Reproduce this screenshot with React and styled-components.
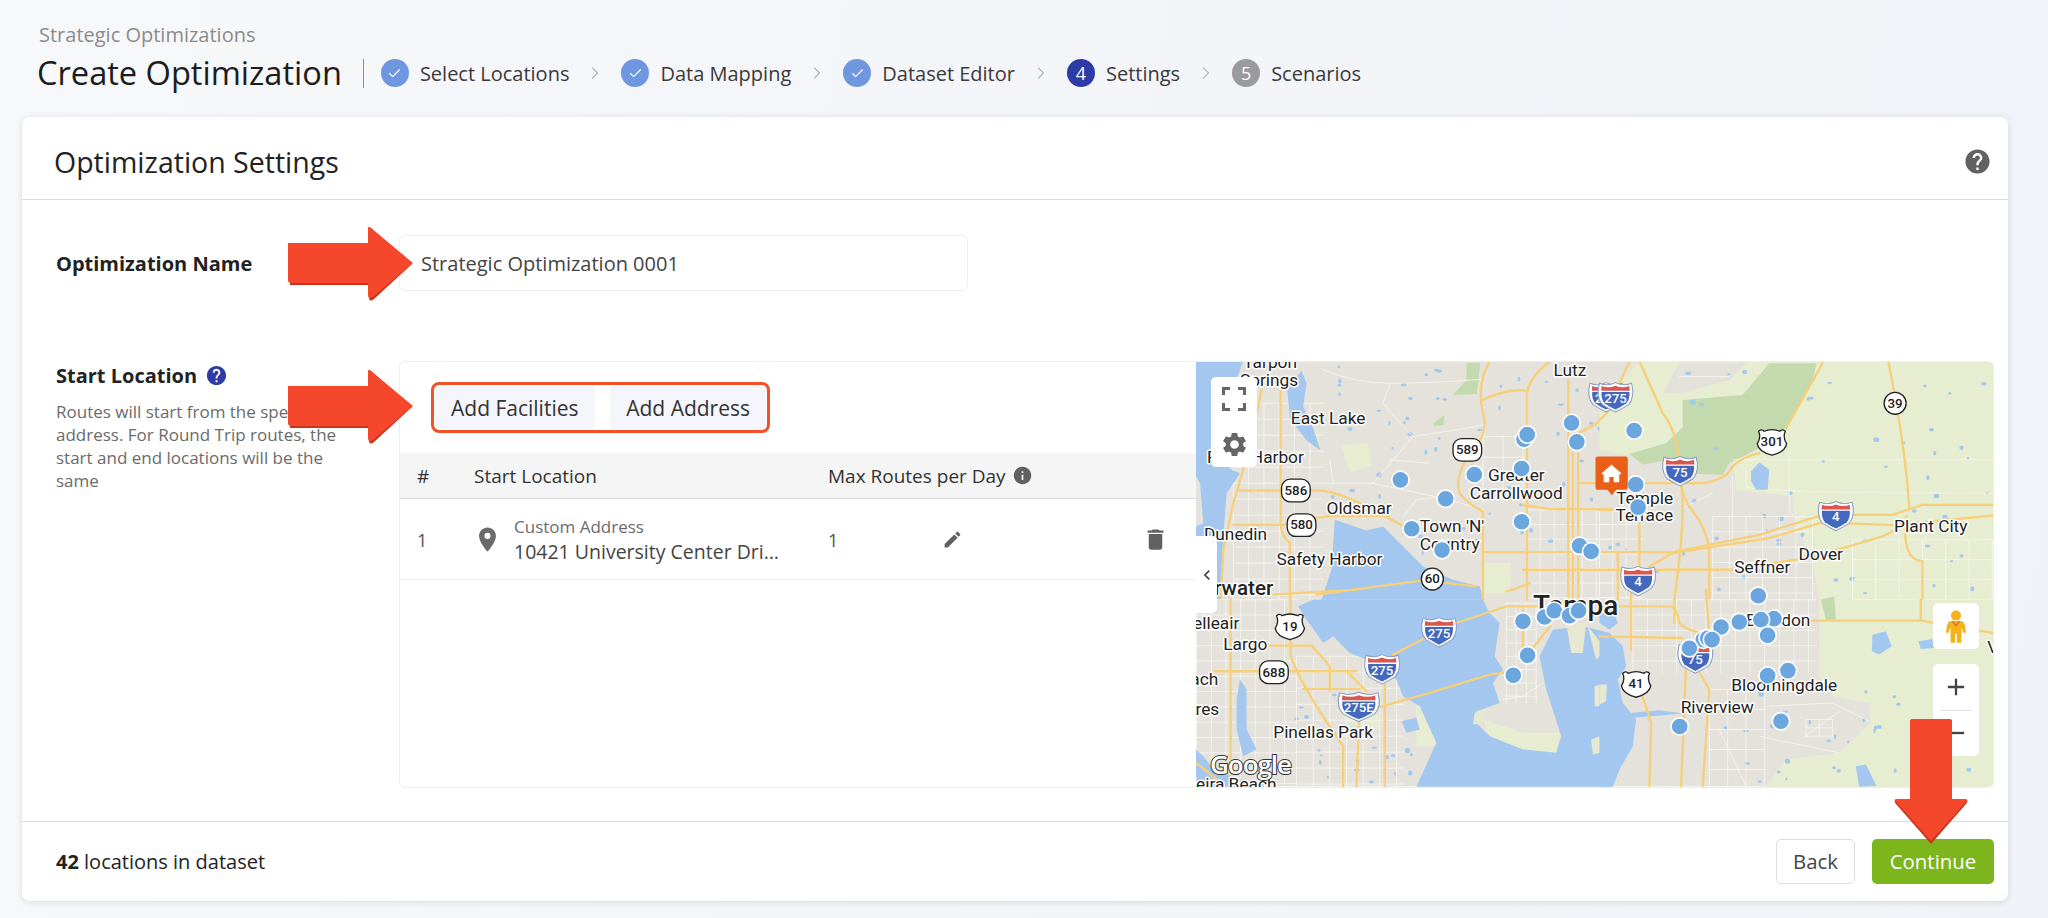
import styled, { createGlobalStyle } from 'styled-components';
import { Check, ChevronRight } from 'lucide-react';
import {
  MdAdd,
  MdChevronLeft,
  MdDelete,
  MdEdit,
  MdHelp,
  MdInfo,
  MdPlace,
  MdRemove,
  MdSettings,
} from 'react-icons/md';

const STEPS = [
  { label: 'Select Locations', state: 'done' },
  { label: 'Data Mapping', state: 'done' },
  { label: 'Dataset Editor', state: 'done' },
  { label: 'Settings', state: 'active', number: 4 },
  { label: 'Scenarios', state: 'todo', number: 5 },
];

// street grids, one per built up area
const gridPath = (x0, y0, x1, y1, stepX, stepY) => {
  let d = '';
  for (let x = x0; x <= x1; x += stepX) d += `M${x},${y0}V${y1}`;
  for (let y = y0; y <= y1; y += stepY) d += `M${x0},${y}H${x1}`;
  return d;
};

// small ponds scattered over the land, always the same ones
const pondList = (count, seed, x0, y0, x1, y1) => {
  let s = seed;
  const next = () => {
    s = (s * 9301 + 49297) % 233280;
    return s / 233280;
  };
  return Array.from({ length: count }, () => ({
    x: x0 + next() * (x1 - x0),
    y: y0 + next() * (y1 - y0),
    rx: 3 + next() * 6,
    ry: 3 + next() * 5,
  }));
};

// The map is authored in four tiles, each one in 3x pixels
const TILES = [
  {
    id: 'nw',
    at: [-18, -36],
    park: ['790,135 830,90 830,38 872,38 862,132', '730,220 765,195 760,225 735,228'],
    pale: ['455,285 535,280 545,350 480,365', '880,640 965,640 960,730 885,730', '360,250 385,240 390,290'],
    water: [
      '18,35 158,35 130,120 100,200 60,300 125,360 150,370 110,430 100,560 90,750 18,750 18,530 40,520 30,400 18,380',
      '292,115 335,62 350,100 340,170 372,240 392,302 350,272 300,205',
      '395,750 425,660 435,510 530,542 580,530 640,590 700,650 790,690 870,710 882,750',
    ],
    white: [
      gridPath(130, 160, 400, 750, 46, 48),
      gridPath(1010, 480, 1260, 750, 42, 44),
      gridPath(880, 260, 1010, 460, 60, 62),
      'M400,60 Q500,100 600,100 T880,88',
      'M600,105 L580,160 L640,230 L670,260 L800,240 L880,225',
      'M550,400 L670,260',
      'M550,400 L780,450 L880,480',
      'M400,400 L550,400',
      'M600,330 L720,340',
      'M420,330 L430,400',
      'M640,500 L680,450 L760,440',
    ],
    yellow: [
      'M272,120 V520 Q275,560 300,580 V750',
      'M150,422 H400 Q450,430 520,465 L640,528',
      'M130,525 H280 Q380,500 440,498 H600',
      'M215,120 Q180,300 130,460 L100,600 L92,750',
      'M900,35 Q860,100 880,190 Q895,240 860,290 Q790,370 810,430 Q830,460 880,485 V750',
      'M880,150 Q950,115 1012,122',
      'M1080,35 Q1020,80 1012,130 V750',
      'M1136,90 V750',
      'M1166,310 V750',
      'M1150,310 V750',
      'M1170,248 Q1220,225 1262,190',
      'M880,607 H1262',
      'M1000,660 H1262',
      'M1000,465 L1080,478 H1262',
      'M1165,400 H1262',
      'M380,735 L700,692 L860,710',
      'M950,725 Q1000,710 1020,700',
    ],
    labels: [
      ['Tarpon', 160, 55],
      ['Springs', 150, 108],
      ['East Lake', 303, 222],
      ['Oldsmar', 410, 492],
      ['Greater', 895, 395],
      ['Carrollwood', 840, 447],
      ["Town 'N'", 690, 548],
      ['Country', 690, 602],
      ['Lutz', 1092, 78],
      ['Dunedin', 42, 570],
      ['Safety Harbor', 260, 645],
    ],
    labelsEnd: [['Palm Harbor', 342, 338]],
    bold: [['Clearwater', 250, 735]],
    stateShields: [
      ['589', 833, 300],
      ['586', 318, 422],
      ['580', 335, 526],
    ],
    circleShields: [['60', 728, 688]],
    usShields: [],
    interstates: [['275', 1250, 140]],
    markers: [
      [632, 390], [768, 447], [854, 374], [996, 356], [1003, 268], [1013, 254], [1146, 219],
      [1162, 276], [666, 537], [757, 601], [996, 516], [1170, 588], [1205, 605],
    ],
    ponds: pondList(70, 17, 420, 40, 1240, 620),
  },
  {
    id: 'ne',
    at: [1212, -36],
    pale: [
      '120,35 1182,35 1182,750 660,750 640,640 590,520 580,440 410,420 400,330 230,340 0,300 0,160',
    ],
    gray: ['240,38 440,38 390,90 250,130 190,130', '400,440 560,440 560,500 400,500'],
    park: [
      '250,150 430,135 510,40 652,40 640,92 560,235 470,300 390,340 370,375 280,372 240,322 130,345 90,312 200,280 250,232',
    ],
    water: ['455,365 480,338 510,360 505,420 470,420 455,392'],
    white: [
      gridPath(0, 480, 130, 750, 40, 44),
      gridPath(340, 500, 640, 750, 50, 46),
      gridPath(760, 570, 1180, 750, 70, 60),
      'M400,330 H1182',
      'M440,360 V410 Q470,430 1182,430',
      'M570,322 V480 L585,500',
      'M400,380 V590',
      'M240,80 H390',
      'M340,430 L260,470',
    ],
    yellow: [
      'M120,35 Q150,100 190,190 Q240,250 245,400 Q250,440 270,470 Q320,530 330,600 V750',
      'M245,400 Q260,500 225,750',
      'M0,210 Q50,170 60,100 L90,35',
      'M0,607 H220 L480,555 L670,495 H880 L970,465 H1182',
      'M150,650 L220,610 L510,565 L670,518 L880,526 L1182,497',
      'M0,660 H400 L640,622 L850,560 L890,540',
      'M120,400 H310 Q380,390 400,350 Q430,320 480,310',
      'M560,235 L670,40',
      'M868,35 Q920,300 930,470',
      'M922,500 Q905,630 970,635 V750',
      'M0,480 H50',
      'M120,520 V700',
      'M55,610 V750',
    ],
    labels: [
      ['Temple', 50, 462],
      ['Terrace', 48, 513],
      ['Seffner', 405, 670],
      ['Dover', 598, 630],
      ['Plant City', 885, 546],
    ],
    circleShields: [['39', 888, 160]],
    usShields: [['301', 518, 276]],
    interstates: [
      ['275', 48, 140],
      ['75', 242, 362],
      ['4', 710, 497],
      ['4', 116, 692],
    ],
    markers: [[104, 242], [109, 404], [116, 472], [477, 738]],
    ponds: pondList(55, 91, 20, 60, 1170, 740),
  },
  {
    id: 'sw',
    at: [-18, 684],
    pale: ['435,360 560,340 570,420 480,400', '680,345 730,350 745,470 680,470', '880,390 1000,430 1110,430 1100,490 1000,480 900,440'],
    water: [
      '325,50 370,30 880,30 900,70 930,100 915,200 940,240 910,280 930,340 860,365 855,395 900,440 1000,480 1100,490 1115,440 1070,300 1050,200 1090,120 1180,110 1262,130 1262,592 680,592 740,460 690,350 640,320 620,270 530,210 480,190 430,140 400,160 350,90',
      '18,480 40,500 70,540 150,570 250,592 18,592',
      '150,270 170,300 170,420 200,480 160,500 140,420 140,330',
      '635,395 680,385 690,420 650,430',
    ],
    land: [
      '1130,100 1190,100 1180,190 1145,190',
      '1195,110 1250,180 1220,210',
      '1215,290 1255,280 1250,350 1215,350',
      '1205,450 1230,440 1235,490 1210,495',
      '855,370 890,360 880,400 850,405',
    ],
    white: [
      gridPath(20, 30, 320, 592, 44, 46),
      gridPath(320, 200, 640, 592, 50, 48),
      gridPath(950, 40, 1040, 340, 30, 40),
      'M370,25 L400,140',
      'M940,330 L1000,320 L1060,280',
    ],
    yellow: [
      'M122,30 V592',
      'M302,30 V200 Q340,300 460,470 V592',
      'M232,168 H365 L420,230 V305',
      'M75,245 H500',
      'M340,298 H510',
      'M470,245 L530,305',
      'M510,340 L500,592',
      'M585,280 V592',
      'M610,195 L700,148 L800,100 L950,50 H1040',
      'M570,352 L720,310 L900,255 L950,248',
      'M1000,60 V210',
      'M1030,175 L1082,110',
      'M250,15 L500,0',
      'M18,520 L80,570',
    ],
    labels: [
      ['Largo', 100, 182],
      ['Pinellas Park', 250, 445],
    ],
    labelsEnd: [
      ['Belleair', 148, 118],
      ['Beach', 85, 285],
      ['Shores', 88, 375],
      ['Madeira Beach', 260, 602],
    ],
    bold: [],
    stateShields: [['688', 252, 248]],
    usShields: [['19', 300, 110]],
    interstates: [
      ['275', 748, 126],
      ['275', 577, 237],
      ['275E', 507, 350, true],
    ],
    markers: [
      [1000, 95], [1065, 82], [1094, 63], [1140, 78], [1167, 63], [1014, 197], [971, 257],
    ],
    ponds: pondList(22, 43, 320, 300, 680, 580),
  },
  {
    id: 'se',
    at: [1212, 684],
    pale: [
      '660,30 1182,30 1182,592 500,592 560,510 720,490 815,400 810,340 700,320 660,260',
    ],
    park: ['665,30 705,20 710,90 680,90'],
    water: [
      '0,130 30,130 70,170 80,230 55,270 70,340 110,390 100,470 60,540 40,592 0,592',
      '0,45 40,60 55,100 30,120 0,100',
      '770,530 800,525 832,590 780,592',
      '820,135 860,125 878,170 840,195 818,185',
      '958,155 1000,148 1005,175 965,178',
      '90,370 180,362 250,372 180,378 100,385',
    ],
    land: ['0,285 22,285 20,335 0,345'],
    white: [
      gridPath(100, 30, 650, 250, 44, 46),
      gridPath(330, 300, 500, 590, 55, 60),
      gridPath(620, 390, 700, 440, 40, 25),
      'M510,350 L700,340 L810,395',
      'M620,440 L720,365',
      'M480,440 L720,490',
      'M360,420 L440,590',
    ],
    yellow: [
      'M965,30 V93',
      'M630,93 H965 L1182,130',
      'M0,50 H215 Q235,60 240,100 Q260,125 330,132',
      'M225,30 V100',
      'M0,140 L250,145',
      'M95,0 V180',
      'M260,230 L245,592',
      'M290,230 L330,300 L310,592',
      'M130,322 L155,400 L150,592',
      'M320,0 L328,120',
    ],
    labels: [
      ['Brandon', 440, 110],
      ['Bloomingdale', 396, 305],
      ['Riverview', 244, 370],
      ['Valrico', 1165, 190],
    ],
    bold: [],
    usShields: [['41', 110, 283]],
    interstates: [['75', 288, 205]],
    markers: [
      [420, 97], [365, 112], [524, 87], [485, 90], [505, 137], [312, 150], [325, 146], [338, 150],
      [270, 176], [505, 258], [566, 243], [241, 411], [545, 395],
    ],
    ponds: pondList(30, 7, 340, 300, 1170, 580),
  },
];

function InterstateShield({ number, x, y, wide }) {
  const scale = wide ? 1.3 : 1.1;
  return (
    <g transform={`translate(${x} ${y})`}>
      <g transform={`scale(${scale} 1)`}>
        <path
          d="M-44,-40 Q-22,-30 0,-42 Q22,-30 44,-40 Q54,0 36,24 Q16,38 0,46 Q-16,38 -36,24 Q-54,0 -44,-40Z"
          fill="#fff"
          stroke="#8d9fc4"
          strokeWidth="3"
        />
        <path
          d="M-38,-14 H38 Q40,6 30,20 Q14,32 0,39 Q-14,32 -30,20 Q-40,6 -38,-14Z"
          fill="#4468bd"
        />
        <path d="M-38,-32 Q-18,-24 0,-33 Q18,-24 38,-32 L39,-18 H-39Z" fill="#d9574f" />
      </g>
      <ShieldNumber x="0" y="18" fill="#fff">
        {number}
      </ShieldNumber>
    </g>
  );
}

function UsShield({ number, x, y }) {
  return (
    <g transform={`translate(${x} ${y})`}>
      <path
        d="M-40,-32 Q-30,-40 -24,-32 Q0,-42 24,-32 Q30,-40 40,-32 Q32,-14 44,6 Q40,30 0,40 Q-40,30 -44,6 Q-32,-14 -40,-32Z"
        fill="#fff"
        stroke="#222"
        strokeWidth="4"
      />
      <ShieldNumber x="0" y="13" fill="#222">
        {number}
      </ShieldNumber>
    </g>
  );
}

function TileLayer({ tile }) {
  return (
    <g transform={`translate(${tile.at[0]} ${tile.at[1]})`}>
      {(tile.pale || []).map((p) => (
        <polygon key={p} points={p} fill="#e7edd0" />
      ))}
      {(tile.gray || []).map((p) => (
        <polygon key={p} points={p} fill="#e4e1da" />
      ))}
      {(tile.park || []).map((p) => (
        <polygon key={p} points={p} fill="#c3d9ae" />
      ))}
      {tile.ponds.map((p, i) => (
        <ellipse key={i} cx={p.x} cy={p.y} rx={p.rx} ry={p.ry} fill="#a3c8ee" />
      ))}
      {tile.white.map((d) => (
        <Road key={d} d={d} stroke="#f7f6f3" strokeWidth="3" strokeOpacity="0.8" />
      ))}
      {tile.water.map((p) => (
        <polygon key={p} points={p} fill="#a3c7ee" />
      ))}
      {(tile.land || []).map((p) => (
        <polygon key={p} points={p} fill="#e6e8d2" />
      ))}
      {tile.yellow.map((d) => (
        <Road key={d} d={d} stroke="#f6cf78" strokeWidth="7" />
      ))}
    </g>
  );
}

function TileOverlay({ tile }) {
  return (
    <g transform={`translate(${tile.at[0]} ${tile.at[1]})`}>
      {(tile.labels || []).map(([text, x, y]) => (
        <MapLabel key={text} x={x} y={y}>
          {text}
        </MapLabel>
      ))}
      {(tile.labelsEnd || []).map(([text, x, y]) => (
        <MapLabel key={text} x={x} y={y} textAnchor="end">
          {text}
        </MapLabel>
      ))}
      {(tile.bold || []).map(([text, x, y]) => (
        <MapLabel key={text} x={x} y={y} textAnchor="end" $big>
          {text}
        </MapLabel>
      ))}
      {(tile.stateShields || []).map(([n, x, y]) => (
        <g key={n} transform={`translate(${x} ${y})`}>
          <rect x="-43" y="-34" width="86" height="68" rx="26" fill="#fff" stroke="#222" strokeWidth="4" />
          <ShieldNumber x="0" y="13" fill="#222">
            {n}
          </ShieldNumber>
        </g>
      ))}
      {(tile.circleShields || []).map(([n, x, y]) => (
        <g key={n} transform={`translate(${x} ${y})`}>
          <circle r="33" fill="#fff" stroke="#222" strokeWidth="4" />
          <ShieldNumber x="0" y="13" fill="#222">
            {n}
          </ShieldNumber>
        </g>
      ))}
      {(tile.usShields || []).map(([n, x, y]) => (
        <UsShield key={n} number={n} x={x} y={y} />
      ))}
      {tile.interstates.map(([n, x, y, wide]) => (
        <InterstateShield key={`${n}${x}`} number={n} x={x} y={y} wide={wide} />
      ))}
    </g>
  );
}

function TileMarkers({ tile }) {
  return (
    <g transform={`translate(${tile.at[0]} ${tile.at[1]})`}>
      {tile.markers.map(([x, y]) => (
        <circle key={`${x}-${y}`} cx={x} cy={y} r="26" fill="#6ba6de" stroke="#fff" strokeWidth="5" />
      ))}
    </g>
  );
}

function MapDrawing() {
  return (
    <MapSvg viewBox="0 0 2394 1275" preserveAspectRatio="none">
      <rect width="2394" height="1275" fill="#e5e2db" />
      {TILES.map((tile) => (
        <TileLayer key={tile.id} tile={tile} />
      ))}
      {TILES.map((tile) => (
        <TileOverlay key={tile.id} tile={tile} />
      ))}
      <MapLabel x="1012" y="760" $tampa>
        Tampa
      </MapLabel>
      {TILES.map((tile) => (
        <TileMarkers key={tile.id} tile={tile} />
      ))}
      {/* home marker of the start location */}
      <g transform="translate(1200 284)">
        <path d="M6,0 H91 Q97,0 97,6 V94 Q97,100 91,100 H62 L49,116 L36,100 H6 Q0,100 0,94 V6 Q0,0 6,0Z" fill="#ea5f17" />
        <path
          d="M48,26 L76,50 V52 H70 V76 H56 V60 H40 V76 H26 V52 H20 V50Z"
          fill="#fff"
          stroke="#fff"
          strokeWidth="3"
          strokeLinejoin="round"
        />
      </g>
      <GoogleMark x="42" y="1238">
        Google
      </GoogleMark>
    </MapSvg>
  );
}

function FullscreenIcon() {
  return (
    <svg width="24" height="24" viewBox="0 0 24 24" fill="none" stroke="#666" strokeWidth="3">
      <path d="M1.5,8 V1.5 H8 M16,1.5 H22.5 V8 M22.5,16 V22.5 H16 M8,22.5 H1.5 V16" />
    </svg>
  );
}

function PegmanIcon() {
  return (
    <svg width="20" height="35" viewBox="0 0 22 36">
      <circle cx="11" cy="6" r="5.5" fill="#f5b21a" />
      <path
        d="M5,12 H17 Q20,13 21,17 L22,25 H19 L17,19 V36 H12 V26 H10 V36 H5 V19 L3,25 H0 L1,17 Q2,13 5,12Z"
        fill="#f5b21a"
      />
      <path d="M7,12 L11,17 L15,12" fill="none" stroke="#d9662b" strokeWidth="1.4" />
    </svg>
  );
}

function Arrow({ className }) {
  return (
    <svg className={className} viewBox="0 0 125 74">
      <path d="M2,19 H81 V3 Q81,-1 84,2 L124,37 L86,72 Q81,76 81,70 V58 H2 Z" fill="#c8341b" />
      <path d="M0,16 H80 V2 Q80,-2 83,1 L125,36 L85,70 Q80,73 80,68 V56 H3 Q0,56 0,53 Z" fill="#f4472c" />
    </svg>
  );
}

function DownArrow({ className }) {
  return (
    <svg className={className} viewBox="0 0 74 125">
      <path d="M16,3 Q16,0 19,0 H55 Q58,0 58,3 V81 H72 Q75,81 72,85 L37,125 L2,85 Q-1,81 2,81 H16Z" fill="#c8341b" />
      <path d="M16,3 Q16,0 19,0 H55 Q58,0 58,3 V80 H71 Q75,80 72,83 L37,122 L2,83 Q-1,80 3,80 H16Z" fill="#f4472c" />
    </svg>
  );
}

export default function App() {
  return (
    <Page>
      <GlobalStyle />
      <Header>
        <Breadcrumb>Strategic Optimizations</Breadcrumb>
        <TitleRow>
          <Title>Create Optimization</Title>
          <Divider />
          <Steps>
            {STEPS.map((step, index) => (
              <Step key={step.label}>
                <StepBadge $state={step.state}>
                  {step.state === 'done' ? <Check size={15} strokeWidth={1.8} /> : step.number}
                </StepBadge>
                <StepLabel>{step.label}</StepLabel>
                {index < STEPS.length - 1 && (
                  <StepChevron>
                    <ChevronRight size={20} strokeWidth={1.5} />
                  </StepChevron>
                )}
              </Step>
            ))}
          </Steps>
        </TitleRow>
      </Header>

      <Card>
        <CardHeader>
          <CardTitle>Optimization Settings</CardTitle>
          <MdHelp size={29} color="#616161" />
        </CardHeader>

        <CardBody>
          <FieldRow>
            <FieldLabel>Optimization Name</FieldLabel>
            <NameInput>Strategic Optimization 0001</NameInput>
          </FieldRow>

          <LocationRow>
            <LocationAside>
              <FieldLabel>
                Start Location
                <MdHelp size={23} color="#2e3ba6" />
              </FieldLabel>
              <Description>
                Routes will start from the specified address. For Round Trip routes, the start and
                end locations will be the same
              </Description>
            </LocationAside>

            <Panel>
              <TablePane>
                <Toolbar>
                  <ButtonGroup>
                    <GhostButton>Add Facilities</GhostButton>
                    <GhostButton>Add Address</GhostButton>
                  </ButtonGroup>
                </Toolbar>
                <TableHead>
                  <span>#</span>
                  <span>Start Location</span>
                  <HeadWithIcon>
                    Max Routes per Day
                    <MdInfo size={21} color="#616161" />
                  </HeadWithIcon>
                </TableHead>
                <TableRow>
                  <CellNumber>1</CellNumber>
                  <AddressCell>
                    <MdPlace size={29} color="#6b6b6b" />
                    <AddressText>
                      <small>Custom Address</small>
                      <span>10421 University Center Drive, Tampa</span>
                    </AddressText>
                  </AddressCell>
                  <CellNumber>1</CellNumber>
                  <MdEdit size={21} color="#616161" />
                  <MdDelete size={27} color="#616161" />
                </TableRow>
              </TablePane>

              <MapPane>
                <MapDrawing />
                <MapTools>
                  <FullscreenIcon />
                  <MdSettings size={29} color="#666" />
                </MapTools>
                <CollapseTab>
                  <MdChevronLeft size={20} color="#444" />
                </CollapseTab>
                <PegmanButton>
                  <PegmanIcon />
                </PegmanButton>
                <ZoomControl>
                  <MdAdd size={28} color="#444" />
                  <ZoomSeparator />
                  <MdRemove size={28} color="#444" />
                </ZoomControl>
              </MapPane>
            </Panel>
          </LocationRow>
        </CardBody>

        <CardFooter>
          <DatasetCount>
            <strong>42</strong> locations in dataset
          </DatasetCount>
          <FooterActions>
            <BackButton>Back</BackButton>
            <ContinueButton>Continue</ContinueButton>
          </FooterActions>
        </CardFooter>
      </Card>

      <NameArrow />
      <AddArrow />
      <ContinueArrow />
    </Page>
  );
}

const GlobalStyle = createGlobalStyle`
  html, body {
    margin: 0;
    padding: 0;
  }
  * {
    box-sizing: border-box;
  }
  body {
    font-family: 'Open Sans', 'Noto Sans', sans-serif;
    color: #222;
  }
`;

const Page = styled.div`
  width: 2048px;
  height: 918px;
  overflow: hidden;
  position: relative;
  display: flex;
  flex-direction: column;
  background: linear-gradient(100deg, #f7f8fa 0%, #f0f2f7 100%);
`;

const Header = styled.header`
  height: 117px;
  padding: 22px 0 0 37px;
`;

const Breadcrumb = styled.div`
  margin-left: 2px;
  font-size: 20px;
  line-height: 26px;
  color: #8b8b8b;
`;

const TitleRow = styled.div`
  margin-top: 3px;
  height: 44px;
  display: flex;
  align-items: center;
`;

const Title = styled.h1`
  margin: 0 21px 0 0;
  font-size: 32.6px;
  font-weight: 400;
  line-height: 44px;
  color: #1c1c1c;
`;

const Divider = styled.div`
  width: 1px;
  height: 29px;
  background: #8b8b8b;
  margin-right: 17px;
`;

const Steps = styled.ol`
  display: flex;
  align-items: center;
  margin: 0;
  padding: 0;
  list-style: none;
`;

const Step = styled.li`
  display: flex;
  align-items: center;
`;

const badgeColors = { done: '#6f97e0', active: '#2e3ba6', todo: '#999a9c' };

const StepBadge = styled.span`
  width: 28px;
  height: 28px;
  border-radius: 50%;
  display: flex;
  justify-content: center;
  align-items: center;
  background: ${({ $state }) => badgeColors[$state]};
  color: #fff;
  font-size: 18px;
`;

const StepLabel = styled.span`
  margin-left: 11px;
  font-size: 20px;
  color: #3a3a3a;
`;

const StepChevron = styled.span`
  width: 52px;
  display: flex;
  justify-content: center;
  color: #b9b9b9;
`;

const Card = styled.main`
  width: 1986px;
  height: 784px;
  margin-left: 22px;
  display: flex;
  flex-direction: column;
  background: #fff;
  border-radius: 8px;
  box-shadow: 0 1px 6px rgba(40, 50, 80, 0.14);
`;

const CardHeader = styled.div`
  height: 84px;
  padding: 6px 16px 0 32px;
  display: flex;
  justify-content: space-between;
  align-items: center;
  border-bottom: 1px solid #dcdcdc;

  h2 {
    padding-top: 2px;
  }
`;

const CardTitle = styled.h2`
  margin: 0;
  font-size: 28.5px;
  font-weight: 400;
  color: #222;
`;

const CardBody = styled.div`
  flex: 1;
  padding: 35px 14px 33px 34px;
  display: flex;
  flex-direction: column;
  gap: 70px;
`;

const FieldRow = styled.div`
  display: flex;
  align-items: center;
`;

const FieldLabel = styled.div`
  width: 343px;
  display: flex;
  align-items: center;
  gap: 8px;
  font-size: 20px;
  font-weight: 700;
  color: #222;
`;

const NameInput = styled.div`
  width: 569px;
  height: 56px;
  padding-left: 21px;
  display: flex;
  align-items: center;
  border: 1px solid #eeeeee;
  border-radius: 6px;
  font-size: 20px;
  color: #444;
`;

const LocationRow = styled.div`
  flex: 1;
  display: flex;
`;

const LocationAside = styled.div`
  width: 343px;
  padding-top: 1px;
`;

const Description = styled.p`
  width: 300px;
  margin: 11px 0 0;
  font-size: 17px;
  line-height: 23px;
  color: #6b6b6b;
`;

const Panel = styled.section`
  flex: 1;
  display: flex;
  border: 1px solid #eeeeee;
  border-radius: 6px;
  overflow: hidden;
`;

const TablePane = styled.div`
  width: 796px;
`;

const Toolbar = styled.div`
  height: 91px;
  padding: 20px 0 0 31px;
`;

const ButtonGroup = styled.div`
  width: 339px;
  height: 51px;
  padding: 1px;
  display: flex;
  justify-content: space-between;
  border: 3px solid #f4502a;
  border-radius: 8px;
`;

const GhostButton = styled.button`
  height: 100%;
  padding: 0 16px;
  border: 0;
  border-radius: 4px;
  background: #f5f6fb;
  font-family: inherit;
  font-size: 21px;
  font-weight: 500;
  color: #333;
`;

const tableColumns = `
  display: grid;
  align-items: center;
  padding-left: 17px;
`;

const TableHead = styled.div`
  ${tableColumns}
  grid-template-columns: 57px 354px 1fr;
  height: 46px;
  background: #f5f5f5;
  border-bottom: 1px solid #d8d8d8;
  font-size: 19px;
  font-weight: 500;
  color: #333;
`;

const HeadWithIcon = styled.span`
  display: flex;
  align-items: center;
  gap: 6px;
`;

const TableRow = styled.div`
  ${tableColumns}
  grid-template-columns: 56px 355px 114px 200px 1fr;
  height: 81px;
  padding-top: 1px;
  border-bottom: 1px solid #f0f0f0;
`;

const CellNumber = styled.span`
  font-size: 18px;
  color: #555;
`;

const AddressCell = styled.div`
  display: flex;
  align-items: center;
  gap: 12px;
`;

const AddressText = styled.div`
  width: 272px;
  display: flex;
  flex-direction: column;

  small {
    font-size: 17px;
    line-height: 24px;
    color: #6b6b6b;
  }

  span {
    font-size: 19.5px;
    line-height: 26px;
    color: #444;
    white-space: nowrap;
    overflow: hidden;
    text-overflow: ellipsis;
  }
`;

const MapPane = styled.div`
  position: relative;
  flex: 1;
`;

const MapSvg = styled.svg`
  display: block;
  width: 100%;
  height: 100%;
`;

const Road = styled.path`
  fill: none;
  stroke-linejoin: round;
  stroke-linecap: round;
`;

const MapLabel = styled.text`
  font-family: Roboto, 'Liberation Sans', sans-serif;
  font-size: ${({ $big, $tampa }) => ($tampa ? 84 : $big ? 62 : 52)}px;
  font-weight: ${({ $big, $tampa }) => ($big || $tampa ? 500 : 400)};
  fill: #222;
  stroke: #fff;
  stroke-width: 9px;
  stroke-linejoin: round;
  paint-order: stroke;
`;

const ShieldNumber = styled.text`
  font-family: Roboto, 'Liberation Sans', sans-serif;
  font-size: 40px;
  font-weight: 500;
  text-anchor: middle;
`;

const GoogleMark = styled.text`
  font-family: 'Open Sans', sans-serif;
  font-size: 78px;
  font-weight: 600;
  fill: #fff;
  stroke: #333;
  stroke-width: 6px;
  paint-order: stroke;
  letter-spacing: -3px;
`;

const MapControlBox = styled.div`
  position: absolute;
  left: ${({ $left }) => $left}px;
  width: 46px;
  background: #fff;
  border-radius: 5px;
  display: flex;
  flex-direction: column;
  align-items: center;
`;

const MapTools = styled(MapControlBox).attrs({ $left: 15 })`
  top: 15px;
  height: 90px;
  justify-content: space-between;
  padding: 10px 0 8px;
`;

const CollapseTab = styled.div`
  position: absolute;
  left: 0;
  top: 174px;
  width: 21px;
  height: 77px;
  background: #fff;
  border-radius: 0 5px 5px 0;
  display: flex;
  justify-content: center;
  align-items: center;
`;

const PegmanButton = styled(MapControlBox).attrs({ $left: 737 })`
  top: 241px;
  height: 46px;
  justify-content: center;
`;

const ZoomControl = styled(MapControlBox).attrs({ $left: 737 })`
  top: 302px;
  height: 92px;
  justify-content: space-between;
  padding: 9px 0;
`;

const ZoomSeparator = styled.div`
  width: 32px;
  height: 1px;
  background: #e2e2e2;
`;

const CardFooter = styled.div`
  height: 81px;
  padding: 0 14px 0 34px;
  display: flex;
  justify-content: space-between;
  align-items: center;
  border-top: 1px solid #dcdcdc;
`;

const DatasetCount = styled.div`
  font-size: 20px;
  color: #222;
`;

const FooterActions = styled.div`
  display: flex;
  gap: 17px;
`;

const FooterButton = styled.button`
  height: 45px;
  border-radius: 5px;
  font-family: inherit;
  font-size: 20.4px;
  font-weight: 500;
`;

const BackButton = styled(FooterButton)`
  width: 79px;
  background: #fff;
  border: 1px solid #dedede;
  color: #444;
`;

const ContinueButton = styled(FooterButton)`
  width: 122px;
  background: #7cb51c;
  border: 0;
  color: #fff;
`;

const NameArrow = styled(Arrow)`
  position: absolute;
  left: 288px;
  top: 227px;
  width: 125px;
  height: 74px;
`;

const AddArrow = styled(Arrow)`
  position: absolute;
  left: 288px;
  top: 370px;
  width: 125px;
  height: 74px;
`;

const ContinueArrow = styled(DownArrow)`
  position: absolute;
  left: 1894px;
  top: 719px;
  width: 74px;
  height: 125px;
`;
